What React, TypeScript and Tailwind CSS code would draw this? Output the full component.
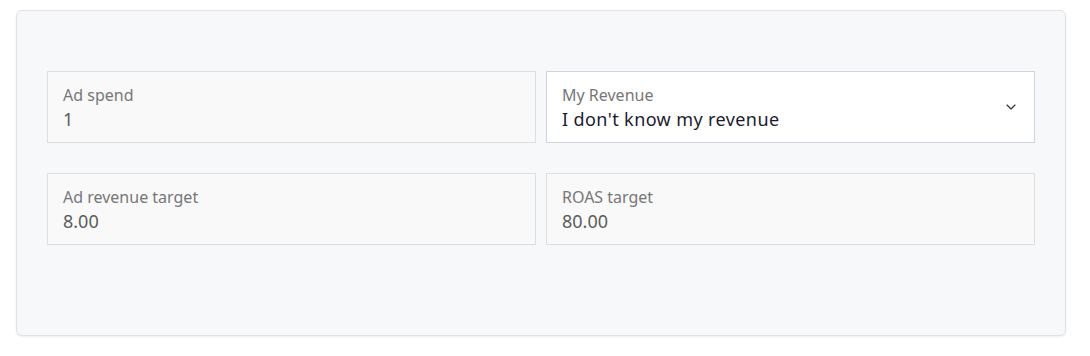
import React from "react";
import { ChevronDown } from "lucide-react";

function ReadonlyField({ label, value }: { label: string; value: string }) {
  return (
    <div className="h-[72px] border border-[#dedede] bg-[#f9f9f9] px-[15px] pt-[12px]">
      <div className="text-[16px] leading-[22px] text-[#777777]">{label}</div>
      <div className="text-[18px] leading-[26px] text-[#5c5c5c]">{value}</div>
    </div>
  );
}

export default function App() {
  return (
    <div className="w-[1090px] h-[356px] bg-white pt-[10px] pl-[16px] font-['Noto_Sans',sans-serif]">
      <div className="w-[1050px] h-[326px] rounded-md border border-[#e0e2e6] bg-[#f7f8fa] shadow-[0_1px_2px_rgba(0,0,0,0.08)] px-[30px] pt-[60px]">
        <div className="grid grid-cols-2 gap-x-[10px] gap-y-[30px]">
          <ReadonlyField label="Ad spend" value="1" />
          <div className="h-[72px] border border-[#cfd3dc] bg-white px-[15px] pt-[12px] flex items-center">
            <div className="flex-1 self-start">
              <div className="text-[16px] leading-[22px] text-[#777777]">My Revenue</div>
              <div className="text-[18px] leading-[26px] tracking-[0.4px] text-[#1c1c2e]">I don't know my revenue</div>
            </div>
            <ChevronDown size={16} strokeWidth={1.75} className="text-[#333] -mt-[12px]" />
          </div>
          <ReadonlyField label="Ad revenue target" value="8.00" />
          <ReadonlyField label="ROAS target" value="80.00" />
        </div>
      </div>
    </div>
  );
}
